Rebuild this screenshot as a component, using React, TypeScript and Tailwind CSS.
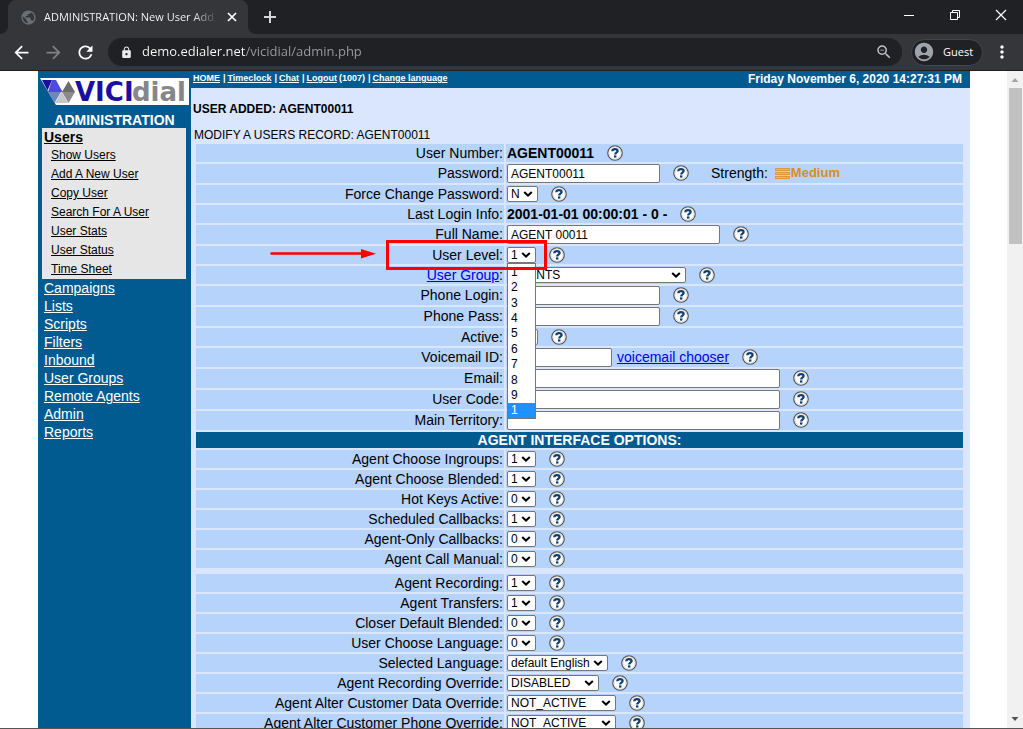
import type { ReactNode } from 'react';
import {
  MdAccountCircle,
  MdArrowBack,
  MdArrowForward,
  MdLock,
  MdMoreVert,
  MdPublic,
  MdRefresh,
  MdZoomOut,
} from 'react-icons/md';

const topLinks = ['HOME', 'Timeclock', 'Chat', 'Logout', 'Change language'];

const userLinks = [
  'Show Users',
  'Add A New User',
  'Copy User',
  'Search For A User',
  'User Stats',
  'User Status',
  'Time Sheet',
];

const sections = [
  'Campaigns',
  'Lists',
  'Scripts',
  'Filters',
  'Inbound',
  'User Groups',
  'Remote Agents',
  'Admin',
  'Reports',
];

const levels = ['1', '2', '3', '4', '5', '6', '7', '8', '9', '1'];

const agentOptions = [
  { label: 'Agent Choose Ingroups', value: '1' },
  { label: 'Agent Choose Blended', value: '1' },
  { label: 'Hot Keys Active', value: '0' },
  { label: 'Scheduled Callbacks', value: '1' },
  { label: 'Agent-Only Callbacks', value: '0' },
  { label: 'Agent Call Manual', value: '0' },
];

const recordingOptions = [
  { label: 'Agent Recording', value: '1' },
  { label: 'Agent Transfers', value: '1' },
  { label: 'Closer Default Blended', value: '0' },
  { label: 'User Choose Language', value: '0' },
  { label: 'Selected Language', value: 'default English', width: 'w-[101px]' },
  { label: 'Agent Recording Override', value: 'DISABLED', width: 'w-[92px]' },
  { label: 'Agent Alter Customer Data Override', value: 'NOT_ACTIVE', width: 'w-[109px]' },
  { label: 'Agent Alter Customer Phone Override', value: 'NOT_ACTIVE', width: 'w-[109px]' },
];

const toId = (label: string) => label.toLowerCase().replace(/\s+/g, '-');

function Help() {
  return (
    <button type="button" aria-label="Help" className="mt-px ml-[13px] size-4 shrink-0">
      <svg viewBox="0 0 16 16" className="size-4">
        <circle cx="8" cy="8" r="7.2" fill="#fff" stroke="#55585c" strokeWidth="1.3" />
        <circle cx="8" cy="8" r="6.1" fill="none" stroke="#d8d4cc" strokeWidth="0.8" />
        <path d="M5.300 6.300C5.400 4.700 6.500 4.200 8 4.200c1.600 0 2.600.7 2.600 1.900 0 1.600-2.400 1.500-2.400 3.300" fill="none" stroke="#10406f" strokeWidth="2.300" />
        <rect x="7" y="10.400" width="2.400" height="2.200" fill="#10406f" />
      </svg>
    </button>
  );
}

function Row({ label, htmlFor, children }: { label: ReactNode; htmlFor?: string; children: ReactNode }) {
  return (
    <div className="grid grid-cols-[308px_1fr] gap-[2px]">
      <div className="flex items-start justify-end bg-[#b6d3fc] pr-px leading-[18px]">
        {htmlFor ? <label htmlFor={htmlFor}>{label}:</label> : <span>{label}:</span>}
      </div>
      <div className="flex min-h-[18px] items-start bg-[#b6d3fc] pl-px leading-[18px]">
        {children}
        <Help />
      </div>
    </div>
  );
}

function Select({ id, value, width = 'w-[29px]' }: { id: string; value: string; width?: string }) {
  return (
    <span className={`relative mt-px flex h-4 shrink-0 ${width}`}>
      <select
        id={id}
        defaultValue={value}
        className="w-full appearance-none rounded-[2px] border border-[#767676] bg-white pl-[3px] text-xs leading-[14px] text-black"
      >
        <option>{value}</option>
      </select>
      <svg viewBox="0 0 10 6" className="pointer-events-none absolute top-[5px] right-[5px] h-[6px] w-[10px]">
        <path d="M1.200 1l3.800 3.600L8.800 1" fill="none" stroke="#000" strokeWidth="2" />
      </svg>
    </span>
  );
}

function TextBox({ id, value = '', width }: { id: string; value?: string; width: string }) {
  return (
    <input
      id={id}
      type="text"
      defaultValue={value}
      className={`h-[19px] shrink-0 rounded-[2px] border border-[#767676] bg-white pl-[3px] text-xs text-black ${width}`}
    />
  );
}

function BrowserBar() {
  return (
    <header className="shrink-0 border-b border-[#1e1f21] bg-[#35363a] font-['Open_Sans',sans-serif] text-white">
      <div className="flex h-[34px] items-center bg-[#202124] pl-2">
        <div className="relative flex h-full w-60 items-center rounded-t-lg bg-[#35363a] pr-[10px] pl-3">
          <svg viewBox="0 0 8 8" className="absolute bottom-0 -left-2 size-2">
            <path d="M8 0v8H0c4.400 0 8-3.600 8-8z" fill="#35363a" />
          </svg>
          <svg viewBox="0 0 8 8" className="absolute -right-2 bottom-0 size-2">
            <path d="M0 0v8h8C3.600 8 0 4.400 0 0z" fill="#35363a" />
          </svg>
          <MdPublic className="size-[17px] shrink-0 text-[#6b6e72]" />
          <span className="ml-[7px] flex-1 overflow-hidden bg-linear-to-r from-white from-85% to-transparent bg-clip-text text-[11px] whitespace-nowrap text-transparent">
            ADMINISTRATION: New User Add
          </span>
          <button type="button" aria-label="Close tab" className="ml-2 size-3">
            <svg viewBox="0 0 12 12" className="size-3">
              <path d="M2 2l8 8M10 2l-8 8" stroke="#fff" strokeWidth="1.700" />
            </svg>
          </button>
        </div>
        <button type="button" aria-label="New tab" className="ml-[15px] size-3.5">
          <svg viewBox="0 0 14 14" className="size-3.5">
            <path d="M7 1v12M1 7h12" stroke="#d5d6d8" strokeWidth="2" />
          </svg>
        </button>
        <div className="mr-4 mb-[5px] ml-auto flex items-center gap-[34px]">
          <button type="button" aria-label="Minimize" className="size-3">
            <svg viewBox="0 0 12 12" className="size-3"><path d="M1 6.500h10" stroke="#fff" /></svg>
          </button>
          <button type="button" aria-label="Restore" className="size-3">
            <svg viewBox="0 0 12 12" className="size-3">
              <path d="M1.500 3.500h7v7h-7zM3.500 3.500v-2h7v7h-2" fill="none" stroke="#fff" />
            </svg>
          </button>
          <button type="button" aria-label="Close" className="size-3">
            <svg viewBox="0 0 12 12" className="size-3"><path d="M1 1l10 10M11 1L1 11" stroke="#fff" strokeWidth="1.200" /></svg>
          </button>
        </div>
      </div>
      <div className="flex h-9 items-center pr-[11px] pl-[11px]">
        <div className="flex items-center gap-[11px]">
          <button type="button" aria-label="Back"><MdArrowBack className="size-[21px]" /></button>
          <button type="button" aria-label="Forward" className="text-[#808185]"><MdArrowForward className="size-[21px]" /></button>
          <button type="button" aria-label="Reload"><MdRefresh className="size-[21px]" /></button>
        </div>
        <div className="ml-3 flex h-7 flex-1 items-center rounded-full bg-[#202124] pr-[9px] pl-3">
          <MdLock className="size-[13px] shrink-0 text-[#e8eaed]" />
          <input
            type="text"
            aria-label="Address"
            defaultValue="demo.edialer.net/vicidial/admin.php"
            className="ml-[9px] min-w-0 flex-1 bg-linear-to-r from-white from-[103px] to-[#9a9da1] to-[103px] bg-clip-text text-[13px] text-transparent"
          />
          <MdZoomOut className="size-[18px] shrink-0 text-[#bdc1c6]" />
        </div>
        <button type="button" className="ml-[9px] flex h-[27px] w-[72px] items-center gap-2 rounded-full border border-[#45464a] bg-[#202124] pl-px text-[11px]">
          <MdAccountCircle className="size-[22px] text-[#a0a4aa]" />
          Guest
        </button>
        <button type="button" aria-label="Menu" className="ml-[9px]"><MdMoreVert className="size-5" /></button>
      </div>
    </header>
  );
}

function Logo() {
  return (
    <svg viewBox="0 0 149 27" className="h-[27px] w-[149px] overflow-visible" role="img" aria-label="VICIdial">
      <path d="M0 0h149v27H16z" fill="#fff" />
      <path d="M2 2h10L7.500 12.500z" fill="#1a0f9e" />
      <path d="M12 2h4l6.500 12H8z" fill="#4b4be0" />
      <path d="M8 14h13l-6.500 11z" fill="#6f87c0" />
      <path d="M28.500 3l6.500 11H22z" fill="#6b6b6b" />
      <path d="M21.500 14L28 25H15z" fill="#c4c6ca" />
      <path d="M22 14h13l-6.500 11z" fill="#8b8b8b" />
      <text x="35" y="23" fontFamily="DejaVu Sans" fontWeight="700" fontSize="26" fill="#1b0fa3">VICI</text>
      <text x="92" y="23" fontFamily="DejaVu Sans" fontWeight="700" fontSize="26" fill="#86878a">dial</text>
    </svg>
  );
}

function Sidebar() {
  return (
    <nav className="w-[153px] shrink-0 bg-[#015b91] pt-[7px] text-white">
      <div className="pl-[2px]"><Logo /></div>
      <h1 className="mt-[7px] text-center font-bold leading-4">ADMINISTRATION</h1>
      <div className="mr-[5px] ml-1 bg-[#e6e6e6] text-black">
        <a href="#users" className="block pl-[2px] font-bold leading-[18px] underline">Users</a>
        <ul className="pl-[9px] text-xs leading-[19px]">
          {userLinks.map((name) => (
            <li key={name}><a href="#users" className="underline">{name}</a></li>
          ))}
        </ul>
      </div>
      <ul className="pl-[6px] leading-[18px]">
        {sections.map((name) => (
          <li key={name}><a href="#section" className="underline">{name}</a></li>
        ))}
      </ul>
    </nav>
  );
}

function LevelSelect() {
  return (
    <div className="relative">
      <Select id="user-level" value="1" />
      {/* Open list of levels */}
      <ul role="listbox" aria-label="User Level" className="absolute top-[17px] left-0 z-10 flex h-[156px] w-[29px] flex-col border border-[#767676] bg-white text-xs">
        {levels.map((level, i) => (
          <li
            key={i}
            role="option"
            aria-selected={i === levels.length - 1}
            className="flex flex-1 items-center pl-[3px] leading-[14px] aria-selected:bg-[#1e90ff] aria-selected:text-white"
          >
            {level}
          </li>
        ))}
      </ul>
      {/* Callout box and arrow */}
      <div className="pointer-events-none absolute -top-[6px] -left-[121px] z-20 h-[30px] w-[161px] border-3 border-[#fe0000]" />
      <svg viewBox="0 0 106 10" className="pointer-events-none absolute top-[3px] -left-[237px] z-20 h-[10px] w-[106px]">
        <path d="M1.500 4.500H94" stroke="#fe0000" strokeWidth="2.500" strokeLinecap="round" />
        <path d="M91 0l15 4.700L91 9.500z" fill="#fe0000" />
      </svg>
    </div>
  );
}

function UserForm() {
  return (
    <form className="flex flex-col gap-[2px] pr-[7px] pl-[5px]">
      <Row label="User Number"><b>AGENT00011</b></Row>
      <Row label="Password" htmlFor="password">
        <TextBox id="password" value="AGENT00011" width="w-[153px]" />
        <span className="order-last ml-[22px]">Strength:</span>
        <span className="order-last ml-[7px] flex items-center text-[13px] font-bold text-[#dd8b1b]">
          <svg viewBox="0 0 15 12" className="mr-px h-3 w-[15px]">
            <path d="M.5 1.500h14v2H.5zM.5 5.500h14v2H.5zM.5 9.500h14v2H.5z" fill="#f2b55c" stroke="#dd8b1b" strokeWidth="0.800" />
          </svg>
          Medium
        </span>
      </Row>
      <Row label="Force Change Password" htmlFor="force-change-password">
        <Select id="force-change-password" value="N" width="w-[31px]" />
      </Row>
      <Row label="Last Login Info"><b>2001-01-01 00:00:01 - 0 -</b></Row>
      <Row label="Full Name" htmlFor="full-name">
        <TextBox id="full-name" value="AGENT 00011" width="w-[213px]" />
      </Row>
      <Row label="User Level" htmlFor="user-level"><LevelSelect /></Row>
      <Row label={<a href="#group" className="text-[#0000ee] underline">User Group</a>} htmlFor="user-group">
        <Select id="user-group" value="AGENTS" width="w-[179px]" />
      </Row>
      <Row label="Phone Login" htmlFor="phone-login"><TextBox id="phone-login" width="w-[153px]" /></Row>
      <Row label="Phone Pass" htmlFor="phone-pass"><TextBox id="phone-pass" width="w-[153px]" /></Row>
      <Row label="Active" htmlFor="active"><Select id="active" value="Y" width="w-[31px]" /></Row>
      <Row label="Voicemail ID" htmlFor="voicemail-id">
        <TextBox id="voicemail-id" width="w-[105px]" />
        <a href="#voicemail" className="ml-[5px] text-[#0000ee] underline">voicemail chooser</a>
      </Row>
      <Row label="Email" htmlFor="email"><TextBox id="email" width="w-[273px]" /></Row>
      <Row label="User Code" htmlFor="user-code"><TextBox id="user-code" width="w-[273px]" /></Row>
      <Row label="Main Territory" htmlFor="main-territory"><TextBox id="main-territory" width="w-[273px]" /></Row>

      <h2 className="bg-[#015b91] text-center font-bold leading-4 text-white">AGENT INTERFACE OPTIONS:</h2>

      {agentOptions.map((o) => (
        <Row key={o.label} label={o.label} htmlFor={toId(o.label)}>
          <Select id={toId(o.label)} value={o.value} />
        </Row>
      ))}
      <div className="mt-1 flex flex-col gap-[2px]">
        {recordingOptions.map((o) => (
          <Row key={o.label} label={o.label} htmlFor={toId(o.label)}>
            <Select id={toId(o.label)} value={o.value} width={o.width} />
          </Row>
        ))}
      </div>
    </form>
  );
}

function ScrollBar() {
  return (
    <div className="flex w-4 shrink-0 flex-col items-center bg-[#f1f1f1]">
      <svg viewBox="0 0 16 17" className="h-[17px] w-4"><path d="M4.500 11h7L8 7z" fill="#a3a3a3" /></svg>
      <div className="h-[156px] w-[13px] bg-[#c1c1c1]" />
      <svg viewBox="0 0 16 17" className="mt-auto h-[17px] w-4"><path d="M4.500 6h7L8 10z" fill="#505050" /></svg>
    </div>
  );
}

export default function App() {
  return (
    <div className="flex h-screen flex-col overflow-hidden bg-white">
      <BrowserBar />
      <div className="flex min-h-0 flex-1 overflow-hidden border-b border-[#555]">
        <div className="flex min-w-0 flex-1 pr-[37px] pl-[38px] font-['Liberation_Sans',Arial,sans-serif] text-sm text-black">
          <Sidebar />
          <main className="min-w-0 flex-1 bg-[#d9e6fe]">
            <div className="flex h-[17px] items-start justify-between bg-[#015b91] pr-2 pl-[2px] font-bold text-white">
              <div className="flex items-center gap-[3px] text-[9px] leading-[14px]">
                {topLinks.map((name, i) => (
                  <span key={name} className="flex gap-[2px]">
                    {i > 0 && <span>|</span>}
                    <a href="#top" className="underline">{name}</a>
                    {name === 'Logout' && <span>(1007)</span>}
                  </span>
                ))}
              </div>
              <span className="text-xs leading-4">Friday November 6, 2020 14:27:31 PM</span>
            </div>
            <p className="mt-3 pl-[2px] text-xs font-bold leading-[18px]">USER ADDED: AGENT00011</p>
            <p className="mt-[9px] pl-[3px] text-xs leading-[17px]">MODIFY A USERS RECORD: AGENT00011</p>
            <UserForm />
          </main>
        </div>
        <ScrollBar />
      </div>
    </div>
  );
}
